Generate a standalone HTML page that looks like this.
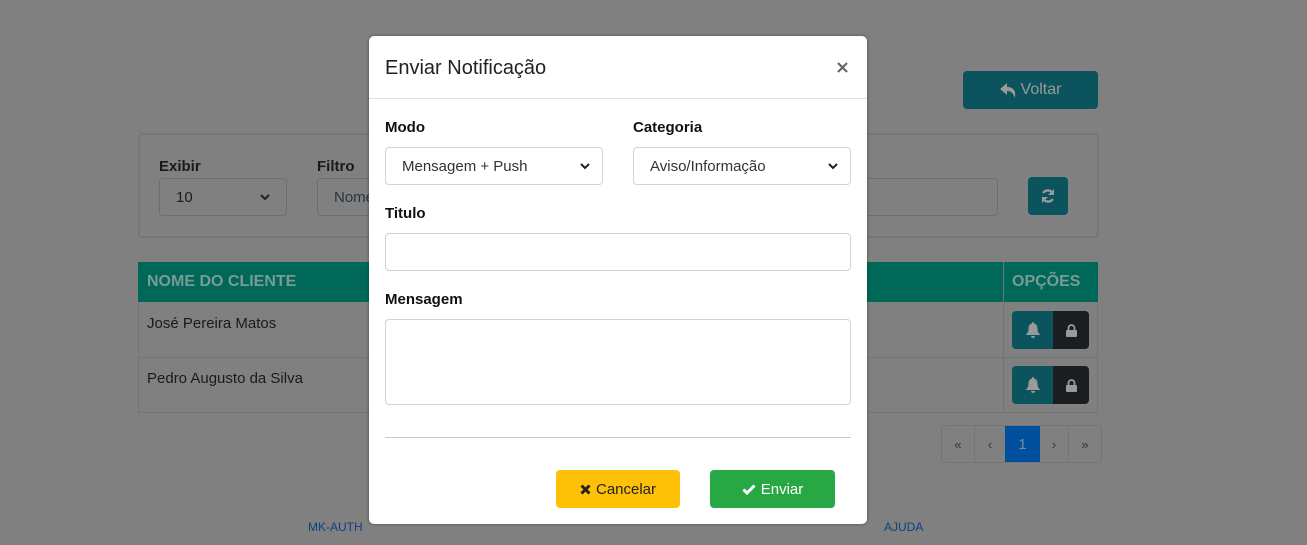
<!DOCTYPE html>
<html><head><meta charset="utf-8"><style>
*{box-sizing:border-box;margin:0;padding:0}
body{width:1307px;height:545px;background:#808080;font-family:"Liberation Sans",sans-serif;position:relative;overflow:hidden;color:#111}
.a{position:absolute}
.ctl{position:absolute;border:1px solid #6e6e6e;border-radius:4px;font-size:15px;color:#1a1a1a;padding:0 16px;display:flex;align-items:center}
.mctl{position:absolute;border:1px solid #ced4da;border-radius:4px;font-size:15px;color:#333;padding:0 12px 0 16px;display:flex;align-items:center;background:#fff}
.lbl{position:absolute;font-weight:bold;font-size:15px}
.chev{margin-left:auto}
.ic{display:flex;align-items:center;justify-content:center}
</style></head><body>
<div class="a" style="left:963px;top:71px;width:135px;height:38px;background:#0b535d;border-radius:4px;color:#9a9a9a;font-size:16px;display:flex;align-items:center;justify-content:center">
<svg width="17" height="15" viewBox="0 0 17 15" style="margin-right:4px"><path d="M7 0 L0 6 L7 12 V8 C11 8 13.5 10 14.5 15 C17 8 13 4 7 4Z" fill="#9a9a9a"/></svg>Voltar</div>
<div class="a" style="left:138px;top:133px;width:961px;height:105px;border:2px solid #767676;border-radius:4px"></div>
<div class="lbl" style="left:159px;top:158px;color:#1a1a1a">Exibir</div>
<div class="ctl" style="left:159px;top:178px;width:128px;height:38px">10<svg class="chev" width="10" height="7" viewBox="0 0 10 7"><path d="M1 1 L5 5 L9 1" stroke="#222" stroke-width="2" fill="none"/></svg></div>
<div class="lbl" style="left:317px;top:158px;color:#1a1a1a">Filtro</div>
<div class="ctl" style="left:317px;top:178px;width:80px;height:38px;color:#2a3340">Nome</div>
<div class="ctl" style="left:850px;top:178px;width:148px;height:38px"></div>
<div class="a ic" style="left:1028px;top:177px;width:40px;height:38px;background:#0b535d;border-radius:4px">
<svg width="16" height="16" viewBox="0 0 16 16"><path d="M13 6 A5.5 5.5 0 0 0 3.2 5" stroke="#9a9a9a" stroke-width="2.4" fill="none"/><path d="M14 1 V7 H8Z" fill="#9a9a9a"/><path d="M3 10 A5.5 5.5 0 0 0 12.8 11" stroke="#9a9a9a" stroke-width="2.4" fill="none"/><path d="M2 15 V9 H8Z" fill="#9a9a9a"/></svg></div>
<div class="a" style="left:138px;top:262px;width:960px;height:40px;background:#006859"></div>
<div class="a" style="left:147px;top:273px;font-weight:bold;font-size:16px;color:#7a9a94">NOME DO CLIENTE</div>
<div class="a" style="left:1003px;top:262px;width:1px;height:151px;background:#747474"></div>
<div class="a" style="left:1012px;top:273px;font-weight:bold;font-size:16px;color:#7a9a94">OPÇÕES</div>
<div class="a" style="left:138px;top:302px;width:960px;height:111px;border:1px solid #747474;border-top:none"></div>
<div class="a" style="left:138px;top:357px;width:960px;height:1px;background:#747474"></div>
<div class="a" style="left:147px;top:315px;font-size:15px;color:#1a1a1a">José Pereira Matos</div>
<div class="a" style="left:147px;top:370px;font-size:15px;color:#1a1a1a">Pedro Augusto da Silva</div>

<div class="a ic" style="left:1012px;top:311px;width:41px;height:38px;background:#0b535d;border-radius:4px 0 0 4px"><svg width="14" height="16" viewBox="0 0 14 16"><path d="M7 0 C8 0 8 1 8 1.5 C10.5 2 11.5 4 11.5 6.5 C11.5 10 12.5 11 14 12.5 V13 H0 V12.5 C1.5 11 2.5 10 2.5 6.5 C2.5 4 3.5 2 6 1.5 C6 1 6 0 7 0Z M5 14 H9 C9 15.2 8 16 7 16 C6 16 5 15.2 5 14Z" fill="#9a9a9a"/></svg></div>
<div class="a ic" style="left:1053px;top:311px;width:36px;height:38px;background:#1b1e21;border-radius:0 4px 4px 0"><svg width="11" height="13" viewBox="0 0 11 13"><path d="M2.5 6 V4 A3 3 0 0 1 8.5 4 V6" stroke="#9a9a9a" stroke-width="1.8" fill="none"/><rect x="0" y="6" width="11" height="7" rx="1" fill="#9a9a9a"/></svg></div>
<div class="a ic" style="left:1012px;top:366px;width:41px;height:38px;background:#0b535d;border-radius:4px 0 0 4px"><svg width="14" height="16" viewBox="0 0 14 16"><path d="M7 0 C8 0 8 1 8 1.5 C10.5 2 11.5 4 11.5 6.5 C11.5 10 12.5 11 14 12.5 V13 H0 V12.5 C1.5 11 2.5 10 2.5 6.5 C2.5 4 3.5 2 6 1.5 C6 1 6 0 7 0Z M5 14 H9 C9 15.2 8 16 7 16 C6 16 5 15.2 5 14Z" fill="#9a9a9a"/></svg></div>
<div class="a ic" style="left:1053px;top:366px;width:36px;height:38px;background:#1b1e21;border-radius:0 4px 4px 0"><svg width="11" height="13" viewBox="0 0 11 13"><path d="M2.5 6 V4 A3 3 0 0 1 8.5 4 V6" stroke="#9a9a9a" stroke-width="1.8" fill="none"/><rect x="0" y="6" width="11" height="7" rx="1" fill="#9a9a9a"/></svg></div>

<div class="a" style="left:941px;top:425px;width:161px;height:38px;border:1px solid #747474;border-radius:4px;display:flex;font-size:13px;color:#333;overflow:hidden">
<div class="ic" style="width:33px;border-right:1px solid #747474">«</div>
<div class="ic" style="width:30px">‹</div>
<div class="ic" style="width:35px;background:#004f9e;color:#7a8a9a;font-size:15px">1</div>
<div class="ic" style="width:29px;border-right:1px solid #747474">›</div>
<div class="ic" style="width:32px">»</div></div>
<div class="a" style="left:308px;top:520px;font-size:12px;color:#0e3f85">MK-AUTH</div>
<div class="a" style="left:884px;top:520px;font-size:12px;color:#0e3f85">AJUDA</div>

<div class="a" style="left:369px;top:36px;width:498px;height:488px;background:#fff;border-radius:5px;box-shadow:0 0 3px rgba(0,0,0,.4)">
<div class="a" style="left:16px;top:21px;font-size:20px;color:#222">Enviar Notificação</div>
<svg class="a" style="left:468px;top:26px" width="11" height="11" viewBox="0 0 11 11"><path d="M1 1 L10 10 M10 1 L1 10" stroke="#666" stroke-width="2.2"/></svg>
<div class="a" style="left:0;top:62px;width:498px;height:1px;background:#dee2e6"></div>
<div class="lbl" style="left:16px;top:83px">Modo</div>
<div class="mctl" style="left:16px;top:111px;width:218px;height:38px">Mensagem + Push<svg class="chev" width="10" height="7" viewBox="0 0 10 7"><path d="M1 1 L5 5 L9 1" stroke="#222" stroke-width="2" fill="none"/></svg></div>
<div class="lbl" style="left:264px;top:83px">Categoria</div>
<div class="mctl" style="left:264px;top:111px;width:218px;height:38px">Aviso/Informação<svg class="chev" width="10" height="7" viewBox="0 0 10 7"><path d="M1 1 L5 5 L9 1" stroke="#222" stroke-width="2" fill="none"/></svg></div>
<div class="lbl" style="left:16px;top:169px">Titulo</div>
<div class="mctl" style="left:16px;top:197px;width:466px;height:38px"></div>
<div class="lbl" style="left:16px;top:255px">Mensagem</div>
<div class="mctl" style="left:16px;top:283px;width:466px;height:86px"></div>
<div class="a" style="left:16px;top:401px;width:466px;height:1px;background:#c8c8c8"></div>
<div class="a ic" style="left:187px;top:434px;width:124px;height:38px;background:#ffc107;border-radius:4px;font-size:15px;color:#222"><svg width="11" height="11" viewBox="0 0 11 11" style="margin-right:5px"><path d="M1.5 1.5 L9.5 9.5 M9.5 1.5 L1.5 9.5" stroke="#222" stroke-width="3"/></svg>Cancelar</div>
<div class="a ic" style="left:341px;top:434px;width:125px;height:38px;background:#28a745;border-radius:4px;font-size:15px;color:#fff"><svg width="14" height="11" viewBox="0 0 14 11" style="margin-right:5px"><path d="M1.5 5.5 L5 9 L12.5 1.5" stroke="#fff" stroke-width="3" fill="none"/></svg>Enviar</div>
</div>
</body></html>
